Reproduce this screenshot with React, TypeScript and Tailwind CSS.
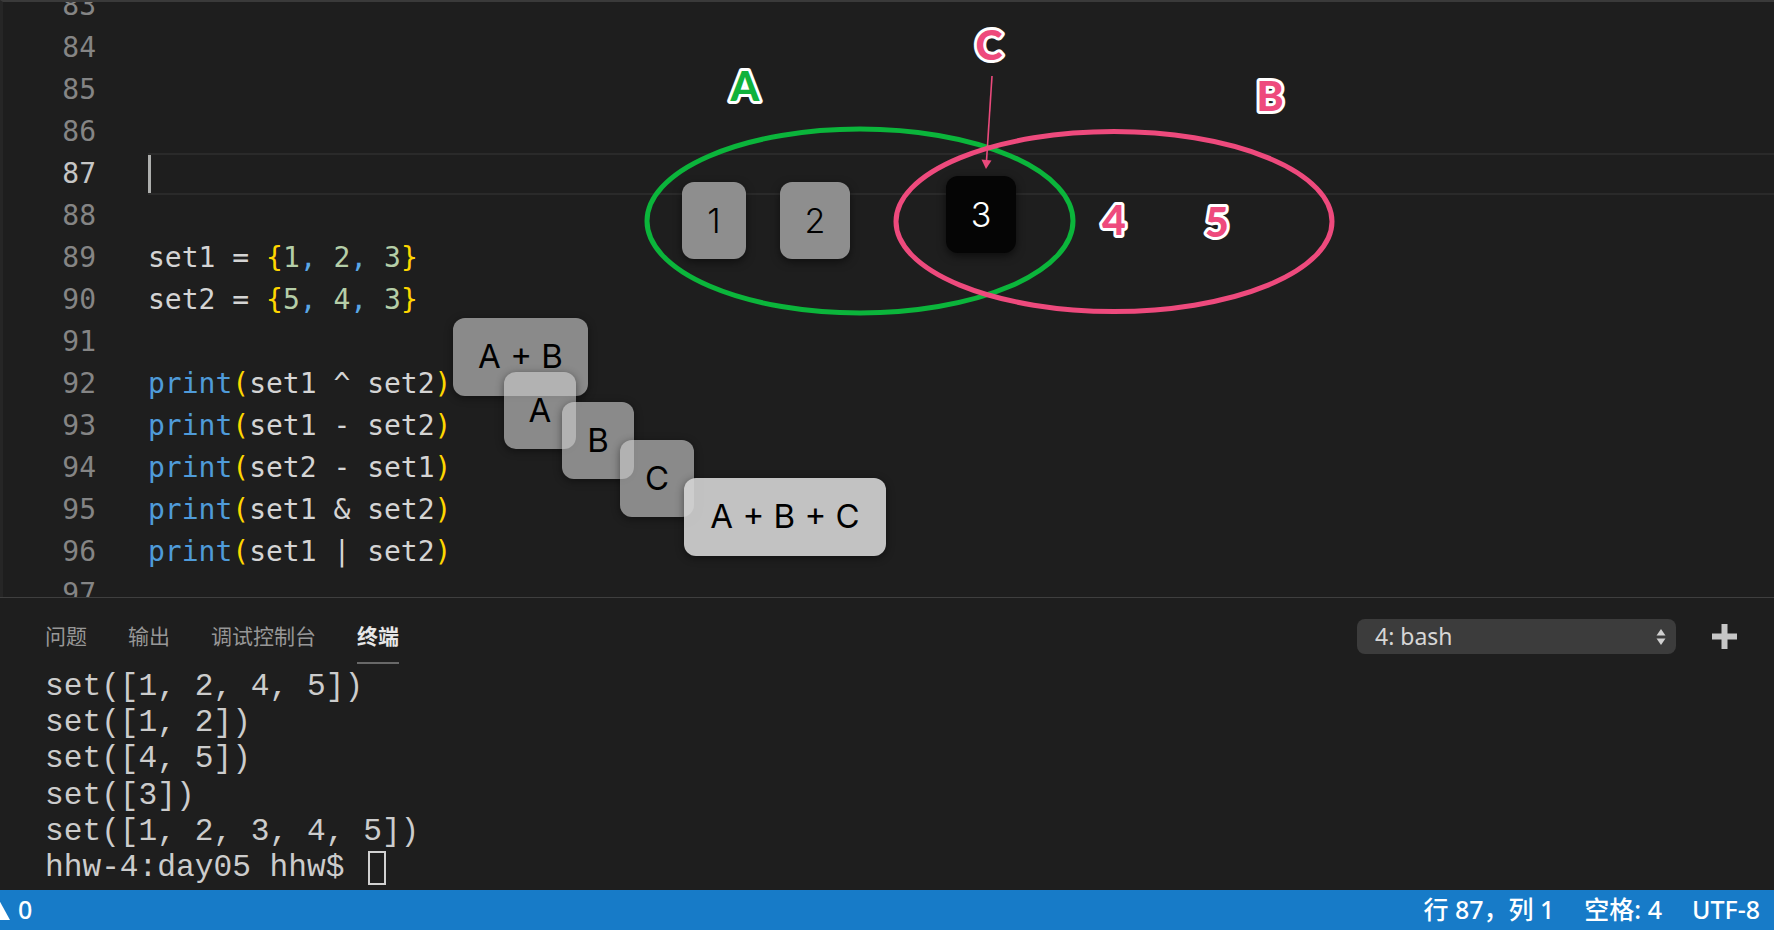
import React from "react";

type Tok = [string, string];

const TXT = "#d4d4d4";
const BRACE = "#ffd700";
const NUM = "#b5cea8";
const COMMA = "#5aa7e6";
const FN = "#4f9bd9";

const setLine = (name: string, a: string, b: string, c: string): Tok[] => [
  [`${name} = `, TXT],
  ["{", BRACE],
  [a, NUM],
  [",", COMMA],
  [" ", TXT],
  [b, NUM],
  [",", COMMA],
  [" ", TXT],
  [c, NUM],
  ["}", BRACE],
];

const printLine = (expr: string): Tok[] => [
  ["print", FN],
  ["(", BRACE],
  [expr, TXT],
  [")", BRACE],
];

const lines: { n: number; toks: Tok[] }[] = [
  { n: 83, toks: [] },
  { n: 84, toks: [] },
  { n: 85, toks: [] },
  { n: 86, toks: [] },
  { n: 87, toks: [] },
  { n: 88, toks: [] },
  { n: 89, toks: setLine("set1", "1", "2", "3") },
  { n: 90, toks: setLine("set2", "5", "4", "3") },
  { n: 91, toks: [] },
  { n: 92, toks: printLine("set1 ^ set2") },
  { n: 93, toks: printLine("set1 - set2") },
  { n: 94, toks: printLine("set2 - set1") },
  { n: 95, toks: printLine("set1 & set2") },
  { n: 96, toks: printLine("set1 | set2") },
  { n: 97, toks: [] },
];

const termLines = [
  "set([1, 2, 4, 5])",
  "set([1, 2])",
  "set([4, 5])",
  "set([3])",
  "set([1, 2, 3, 4, 5])",
];

const tabs = ["问题", "输出", "调试控制台", "终端"];

const Editor = () => (
  <div className="h-[597px] shrink-0 overflow-hidden border-t-2 border-l-[3px] border-t-[#3a3a3a] border-l-[#262626] font-['DejaVu_Sans_Mono',monospace] text-[28px]">
    <div className="-mt-[17px]">
      {lines.map(({ n, toks }) => {
        const active = n === 87;
        return (
          <div key={n} className="flex h-[42px] items-center">
            <div className={`w-[93px] shrink-0 text-right ${active ? "text-[#c6c6c6]" : "text-[#858585]"}`}>
              {n}
            </div>
            {active ? (
              <div className="ml-[52px] flex h-full flex-1 items-stretch border-y-2 border-[#2a2a2a]">
                <div className="w-[3px] bg-[#aeafad]" />
              </div>
            ) : (
              <div className="ml-[52px] whitespace-pre">
                {toks.map(([t, c], i) => (
                  <span key={i} style={{ color: c }}>
                    {t}
                  </span>
                ))}
              </div>
            )}
          </div>
        );
      })}
    </div>
  </div>
);

const Panel = () => (
  <div className="flex h-[293px] shrink-0 flex-col border-t border-[#3f3f3f]">
    <div className="flex h-[71px] shrink-0 items-start justify-between">
      <div className="flex gap-[41px] pl-[45px] pt-[26px] font-['Noto_Sans_CJK_SC',sans-serif] text-[21px] leading-[22px]">
        {tabs.map((t) => (
          <div
            key={t}
            className={`border-b-2 pb-[16px] ${t === "终端" ? "border-[#686868] font-bold text-[#e7e7e7]" : "border-transparent text-[#979797]"}`}
          >
            {t}
          </div>
        ))}
      </div>
      <div className="flex items-center pr-[37px] pt-[21px]">
        <div className="flex h-[35px] w-[319px] items-center justify-between rounded-[8px] bg-[#3c3c3c] pl-[18px] pr-[10px] font-['Noto_Sans',sans-serif] text-[23px] text-[#d6d6d6]">
          <span>4: bash</span>
          <svg width="10" height="18" viewBox="0 0 10 18">
            <path d="M5 1 L9.5 7.5 H0.5 Z" fill="#d0d0d0" />
            <path d="M5 17 L9.5 10.5 H0.5 Z" fill="#d0d0d0" />
          </svg>
        </div>
        <svg className="ml-[36px]" width="25" height="25" viewBox="0 0 25 25">
          <rect x="9.5" y="0" width="6" height="25" fill="#c6c6c6" />
          <rect x="0" y="9.5" width="25" height="6" fill="#c6c6c6" />
        </svg>
      </div>
    </div>
    <div className="pl-[45px] font-['Liberation_Mono',monospace] text-[31.2px] leading-[36.2px] text-[#cccccc] whitespace-pre">
      {termLines.map((l) => (
        <div key={l}>{l}</div>
      ))}
      <div className="flex items-center">
        <span>hhw-4:day05 hhw$</span>
        <span className="ml-[24px] h-[34px] w-[18px] border-2 border-[#d0d0d0]" />
      </div>
    </div>
  </div>
);

const StatusBar = () => (
  <div className="flex h-[40px] shrink-0 items-center justify-between bg-[#177bc8] font-['Noto_Sans','Noto_Sans_CJK_SC',sans-serif] text-[25px] font-medium text-white">
    <div className="flex items-center">
      <svg className="-ml-[12px]" width="22" height="20" viewBox="0 0 22 20">
        <path d="M11 0 L22 20 H0 Z" fill="#ffffff" />
      </svg>
      <span className="ml-[8px]">0</span>
    </div>
    <div className="flex gap-[30px] pr-[14px]">
      <span>行 87，列 1</span>
      <span>空格: 4</span>
      <span>UTF-8</span>
    </div>
  </div>
);

const Key = ({ label, cls }: { label: string; cls: string }) => (
  <div
    className={`absolute flex items-center justify-center rounded-[12px] font-['Inter',sans-serif] text-[33px] text-black shadow-[0_2px_8px_rgba(0,0,0,0.45)] ${cls}`}
  >
    {label}
  </div>
);

const Overlay = () => (
  <div className="pointer-events-none absolute inset-0">
    <svg className="absolute inset-0" width="1774" height="930" viewBox="0 0 1774 930">
      <ellipse cx="860" cy="221" rx="213" ry="92" fill="none" stroke="#0bb53b" strokeWidth="5" />
      <ellipse cx="1114" cy="221.5" rx="218" ry="90" fill="none" stroke="#ee4a7d" strokeWidth="5" />
      <line x1="992" y1="76" x2="986.5" y2="161" stroke="#ea4a7c" strokeWidth="1.6" />
      <path d="M981.5 159.5 L991.5 160.5 L986 169 Z" fill="#ea4a7c" />
      <g
        className="[paint-order:stroke]"
        fontFamily="Lato, 'DejaVu Sans', sans-serif"
        fontWeight="900"
        fontSize="41"
        textAnchor="middle"
        stroke="#ffffff"
        strokeWidth="6"
        strokeLinejoin="round"
      >
        <text x="745" y="101" fill="#10b23c">A</text>
        <text x="989" y="60" fill="#ee4a7d">C</text>
        <text x="1270" y="111" fill="#ee4a7d">B</text>
        <text x="1114" y="235" fill="#ee4a7d">4</text>
        <text x="1217" y="237" fill="#ee4a7d">5</text>
      </g>
    </svg>

    <div className="absolute left-[682px] top-[182px] flex h-[77px] w-[64px] items-center justify-center rounded-[12px] bg-[#8e8e8e] font-['Inter',sans-serif] text-[34px] font-light text-black shadow-[0_3px_8px_rgba(0,0,0,0.5)]">
      1
    </div>
    <div className="absolute left-[780px] top-[182px] flex h-[77px] w-[70px] items-center justify-center rounded-[12px] bg-[#8e8e8e] font-['Inter',sans-serif] text-[34px] font-light text-black shadow-[0_3px_8px_rgba(0,0,0,0.5)]">
      2
    </div>
    <div className="absolute left-[946px] top-[176px] flex h-[77px] w-[70px] items-center justify-center rounded-[12px] bg-[#050505] font-['Inter',sans-serif] text-[34px] font-light text-white shadow-[0_3px_8px_rgba(0,0,0,0.6)]">
      3
    </div>

    <Key label="A + B" cls="left-[453px] top-[318px] h-[78px] w-[135px] bg-[rgba(200,200,200,0.64)]" />
    <Key label="A" cls="left-[504px] top-[372px] h-[77px] w-[72px] bg-[rgba(200,200,200,0.64)]" />
    <Key label="B" cls="left-[562px] top-[402px] h-[77px] w-[72px] bg-[rgba(200,200,200,0.64)]" />
    <Key label="C" cls="left-[620px] top-[440px] h-[77px] w-[74px] bg-[rgba(200,200,200,0.64)]" />
    <Key label="A + B + C" cls="left-[684px] top-[478px] h-[78px] w-[202px] bg-[rgba(212,212,212,0.9)]" />
  </div>
);

export default function App() {
  return (
    <div className="relative flex h-[930px] w-[1774px] flex-col overflow-hidden bg-[#1e1e1e]">
      <Editor />
      <Panel />
      <StatusBar />
      <Overlay />
    </div>
  );
}
